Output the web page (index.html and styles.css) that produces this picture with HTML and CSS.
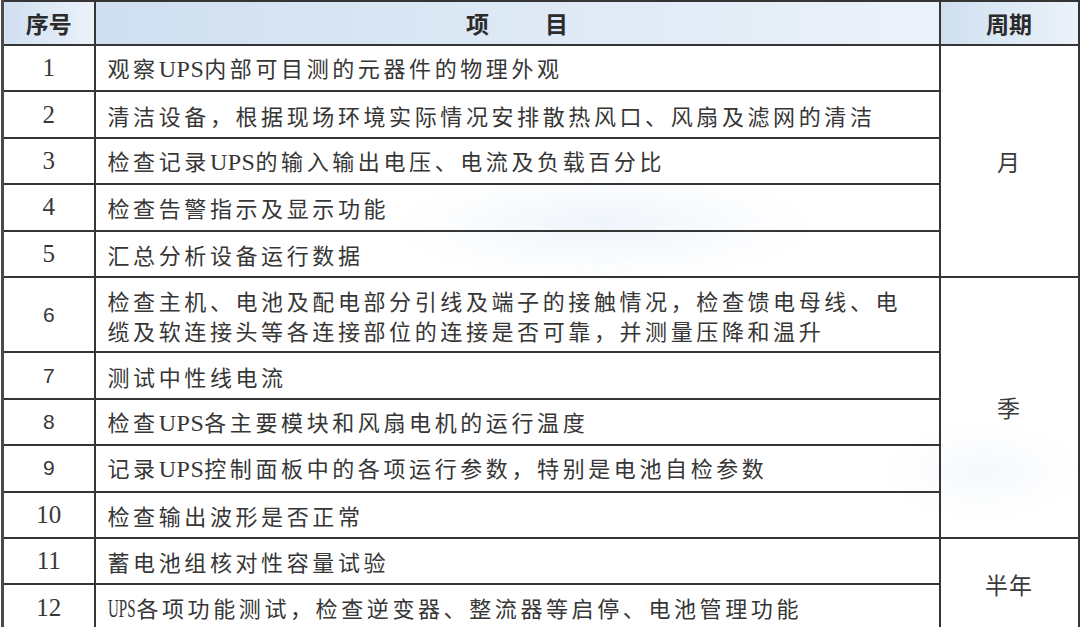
FILE: index.html
```html
<!DOCTYPE html>
<html lang="zh-CN">
<head>
<meta charset="utf-8">
<title>UPS 维护项目</title>
<link rel="stylesheet" href="styles.css">
</head>
<body>
<table class="plan">
  <colgroup>
    <col class="c-no">
    <col class="c-item">
    <col class="c-period">
  </colgroup>
  <thead>
    <tr class="head">
      <th>序号</th>
      <th><span class="split"><span>项</span><span>目</span></span></th>
      <th>周期</th>
    </tr>
  </thead>
  <tbody>
    <tr><td class="no serif">1</td><td class="item">观察<span class="lat">UPS</span>内部可目测的元器件的物理外观</td><td class="period" rowspan="5">月</td></tr>
    <tr><td class="no serif">2</td><td class="item">清洁设备，根据现场环境实际情况安排散热风口、风扇及滤网的清洁</td></tr>
    <tr><td class="no serif">3</td><td class="item">检查记录<span class="lat">UPS</span>的输入输出电压、电流及负载百分比</td></tr>
    <tr><td class="no serif">4</td><td class="item">检查告警指示及显示功能</td></tr>
    <tr><td class="no serif">5</td><td class="item">汇总分析设备运行数据</td></tr>
    <tr class="tall"><td class="no sans">6</td><td class="item">检查主机、电池及配电部分引线及端子的接触情况，检查馈电母线、电<br>缆及软连接头等各连接部位的连接是否可靠，并测量压降和温升</td><td class="period" rowspan="5">季</td></tr>
    <tr><td class="no sans">7</td><td class="item">测试中性线电流</td></tr>
    <tr><td class="no sans">8</td><td class="item">检查<span class="lat">UPS</span>各主要模块和风扇电机的运行温度</td></tr>
    <tr><td class="no sans">9</td><td class="item">记录<span class="lat">UPS</span>控制面板中的各项运行参数，特别是电池自检参数</td></tr>
    <tr><td class="no serif">10</td><td class="item">检查输出波形是否正常</td></tr>
    <tr><td class="no serif">11</td><td class="item">蓄电池组核对性容量试验</td><td class="period" rowspan="2">半年</td></tr>
    <tr><td class="no serif">12</td><td class="item"><span class="lat narrow">UPS</span>各项功能测试，检查逆变器、整流器等启停、电池管理功能</td></tr>
  </tbody>
</table>
</body>
</html>
```

FILE: styles.css
```css
html, body {
  margin: 0;
  padding: 0;
  background: #ffffff;
  overflow: hidden;
}

body {
  width: 1080px;
  height: 627px;
  padding-left: 1px;
  box-sizing: border-box;
  font-family: "Noto Sans CJK SC", "Noto Sans", sans-serif;
  color: #333333;
}

.plan {
  border-collapse: collapse;
  table-layout: fixed;
  width: 1076px;
  background:
    radial-gradient(ellipse 300px 80px at 600px 225px, rgba(196, 218, 240, 0.28), rgba(255,255,255,0) 70%),
    radial-gradient(ellipse 140px 70px at 980px 470px, rgba(196, 218, 240, 0.18), rgba(255,255,255,0) 70%),
    #ffffff;
}

.c-no { width: 92px; }
.c-item { width: 845px; }
.c-period { width: 139px; }

.plan th,
.plan td {
  border: 2px solid #353535;
  padding: 0;
}

.plan tr > :first-child {
  border-left: 3px solid #4a4a4a;
}

.head th {
  height: 42px;
  background: linear-gradient(90deg, #cfdff0 0%, #dae7f4 40%, #e4edf7 75%, #ecf2fa 100%);
  font-weight: 700;
  font-size: 23px;
  color: #2b2b2b;
  text-align: center;
  vertical-align: middle;
}

.split {
  display: inline-flex;
  gap: 56px;
}

.plan tbody tr {
  height: 46.4px;
}

.plan tbody tr.tall {
  height: 75.5px;
}

.no {
  text-align: center;
  color: #383838;
}

.no.serif {
  font-family: "Liberation Serif", "DejaVu Serif", serif;
  font-size: 25px;
}

.no.sans {
  font-family: "Liberation Sans", "DejaVu Sans", sans-serif;
  font-size: 21px;
}

.item {
  padding: 0 8px 0 12px !important;
  font-size: 22px;
  letter-spacing: 3.6px;
  line-height: 30px;
  color: #363636;
  text-align: left;
}

.lat {
  font-family: "Liberation Serif", "DejaVu Serif", serif;
  font-size: 24px;
  letter-spacing: 0.5px;
}

.lat.narrow {
  display: inline-block;
  font-size: 25px;
  letter-spacing: 0;
  transform: scaleX(0.6);
  transform-origin: 0 50%;
  margin-right: -17px;
}

.period {
  text-align: center;
  vertical-align: middle;
  font-size: 23px;
  color: #3a3a3a;
  letter-spacing: 1px;
}
```
